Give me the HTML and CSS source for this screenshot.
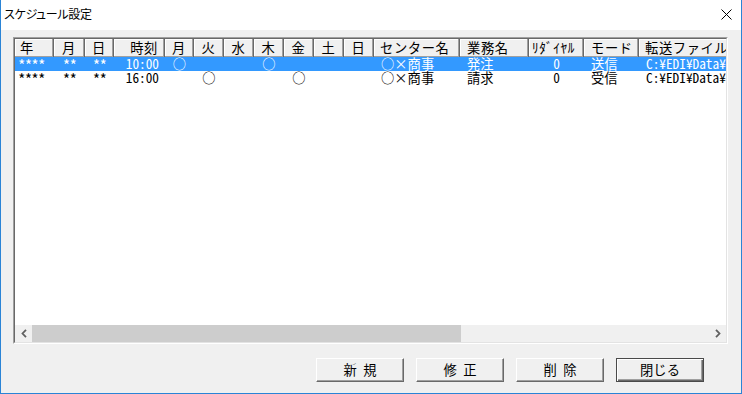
FILE: index.html
```html
<!DOCTYPE html>
<html lang="ja">
<head>
<meta charset="utf-8">
<link rel="stylesheet" href="styles.css">
</head>
<body>
<div class="window">
  <div class="titlebar">
    <span class="title">スケジュール設定</span>
    <svg class="close" width="11" height="11" viewBox="0 0 11 11"><path d="M0.5 0.5 L10.5 10.5 M10.5 0.5 L0.5 10.5" stroke="#000" stroke-width="1" fill="none"/></svg>
  </div>
  <div class="body">
    <div class="list">
      <div class="list-inner">
        <div class="grid header">
          <div class="h l5">年</div>
          <div class="h c">月</div>
          <div class="h c">日</div>
          <div class="h r">時刻</div>
          <div class="h c">月</div>
          <div class="h c">火</div>
          <div class="h c">水</div>
          <div class="h c">木</div>
          <div class="h c">金</div>
          <div class="h c">土</div>
          <div class="h c">日</div>
          <div class="h l6">センター名</div>
          <div class="h l7">業務名</div>
          <div class="h l3">ﾘﾀﾞｲﾔﾙ</div>
          <div class="h l7">モード</div>
          <div class="h l6">転送ファイル</div>
        </div>
        <div class="grid row sel">
          <div class="d l3"><span class="a st">****</span></div>
          <div class="d c"><span class="a st">**</span></div>
          <div class="d c"><span class="a st">**</span></div>
          <div class="d r"><span class="a">10:00</span></div>
          <div class="d c">○</div>
          <div class="d c"></div>
          <div class="d c"></div>
          <div class="d c">○</div>
          <div class="d c"></div>
          <div class="d c"></div>
          <div class="d c"></div>
          <div class="d l7">○<span class="x">×</span>商事</div>
          <div class="d l7">発注</div>
          <div class="d c"><span class="a">0</span></div>
          <div class="d l7">送信</div>
          <div class="d l7"><span class="a">C:¥EDI¥Data¥</span></div>
        </div>
        <div class="grid row">
          <div class="d l3"><span class="a st">****</span></div>
          <div class="d c"><span class="a st">**</span></div>
          <div class="d c"><span class="a st">**</span></div>
          <div class="d r"><span class="a">16:00</span></div>
          <div class="d c"></div>
          <div class="d c">○</div>
          <div class="d c"></div>
          <div class="d c"></div>
          <div class="d c">○</div>
          <div class="d c"></div>
          <div class="d c"></div>
          <div class="d l7">○<span class="x">×</span>商事</div>
          <div class="d l7">請求</div>
          <div class="d c"><span class="a">0</span></div>
          <div class="d l7">受信</div>
          <div class="d l7"><span class="a">C:¥EDI¥Data¥</span></div>
        </div>
        <div class="fill"></div>
        <div class="hscroll">
          <div class="arrow">
            <svg width="6" height="9" viewBox="0 0 6 9"><path d="M5 0.8 L1.5 4.5 L5 8.2" stroke="#606060" stroke-width="1.8" fill="none"/></svg>
          </div>
          <div class="thumb"></div>
          <div class="track"></div>
          <div class="arrow">
            <svg width="6" height="9" viewBox="0 0 6 9"><path d="M1 0.8 L4.5 4.5 L1 8.2" stroke="#606060" stroke-width="1.8" fill="none"/></svg>
          </div>
        </div>
      </div>
    </div>
    <div class="buttons">
      <div class="btn">新&ensp;規</div>
      <div class="btn">修&ensp;正</div>
      <div class="btn">削&ensp;除</div>
      <div class="btn def">閉じる</div>
    </div>
  </div>
</div>
</body>
</html>
```
FILE: styles.css
```css
* { box-sizing: border-box; }
html, body { margin: 0; padding: 0; }
body {
  width: 742px;
  height: 394px;
  overflow: hidden;
  font-family: "Noto Sans CJK JP", sans-serif;
  color: #000;
}
.window {
  width: 742px;
  height: 394px;
  display: flex;
  flex-direction: column;
  border: 1px solid #2a84d6;
  border-top: none;
  background: #f0f0f0;
}
.titlebar {
  height: 30px;
  flex-shrink: 0;
  background: #fff;
  display: flex;
  align-items: center;
  justify-content: space-between;
  padding: 0 9px 2px 3px;
}
.title {
  font-size: 12px;
  font-feature-settings: "palt";
  letter-spacing: -0.3px;
  line-height: 14px;
}
.close { display: block; }
.body {
  flex: 1;
  display: flex;
  flex-direction: column;
  padding: 7px 0 0 12px;
}
.list {
  width: 715px;
  height: 307px;
  border: 1px solid;
  border-color: #a0a0a0 #fff #fff #a0a0a0;
}
.list-inner {
  width: 100%;
  height: 100%;
  border: 1px solid;
  border-color: #696969 #e3e3e3 #e3e3e3 #696969;
  background: #fff;
  display: flex;
  flex-direction: column;
  overflow: hidden;
}
.grid {
  display: grid;
  grid-template-columns: 39px 31px 29px 51px 29px 30px 30px 30px 30px 30px 30px 86px 69px 55px 55px 120px;
  width: 744px;
  flex-shrink: 0;
}
.header {
  height: 18px;
  background: #f0f0f0;
}
.h {
  font-size: 13.3px;
  letter-spacing: 0.6px;
  line-height: 18px;
  white-space: nowrap;
  overflow: hidden;
  box-shadow: inset -1px -1px #a0a0a0, inset 1px 1px #fff;
  border-right: 1px solid #696969;
}
.row {
  height: 14px;
}
.row.sel {
  background: #3399ff;
  color: #fff;
}
.d {
  font-size: 13.3px;
  line-height: 14px;
  white-space: nowrap;
  overflow: hidden;
}
.a {
  font-family: "Noto Sans Mono CJK JP", "Liberation Mono", monospace;
  font-size: 13.3px;
}
.a.st {
  font-size: 15px;
  letter-spacing: -0.83px;
  vertical-align: -2px;
}
.x { display: inline-block; width: 13.3px; text-align: center; }
.c { text-align: center; }
.r { text-align: right; padding-right: 6px; }
.l3 { padding-left: 3px; }
.l5 { padding-left: 5px; }
.l6 { padding-left: 6px; }
.l7 { padding-left: 7px; }
.fill { flex: 1; }
.hscroll {
  height: 17px;
  flex-shrink: 0;
  display: flex;
  background: #f0f0f0;
}
.arrow {
  width: 17px;
  display: flex;
  align-items: center;
  justify-content: center;
}
.arrow svg { display: block; }
.thumb {
  width: 429px;
  background: #cdcdcd;
}
.track { flex: 1; }
.buttons {
  display: flex;
  gap: 12px;
  margin-top: 14px;
  padding-left: 303px;
}
.btn {
  width: 88px;
  height: 24px;
  font-size: 13.3px;
  line-height: 22px;
  text-align: center;
  background: #f0f0f0;
  border: 1px solid;
  border-color: #fff #696969 #696969 #fff;
  box-shadow: inset -1px -1px #a0a0a0;
}
.btn.def {
  border: 1px solid #4a4a4a;
  box-shadow: inset 1px 1px #fff, inset -1px -1px #696969, inset -2px -2px #a0a0a0;
}
```
